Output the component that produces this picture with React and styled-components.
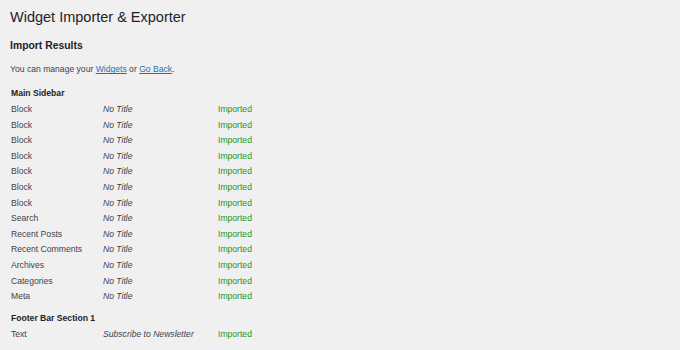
import styled, { createGlobalStyle } from "styled-components";

const GlobalStyle = createGlobalStyle`
  body {
    margin: 0;
    background: #f0f0f1;
    font-family: "Liberation Sans", Arial, sans-serif;
    color: #3c434a;
  }
`;

const Page = styled.div`
  padding: 9.5px 10px 0 10px;
  width: 660px;
  height: 340.5px;
  overflow: hidden;
`;
const Title = styled.h1`
  margin: 0;
  font-size: 14.5px;
  line-height: 15px;
  font-weight: 400;
  color: #1d2327;
`;
const Subtitle = styled.h2`
  margin: 15.5px 0 0 0;
  font-size: 10.4px;
  line-height: 12px;
  font-weight: 700;
  color: #1d2327;
`;
const Note = styled.p`
  margin: 12.3px 0 0 0;
  font-size: 8.6px;
  line-height: 11px;
`;
const Link = styled.a`
  color: #2271b1;
  text-decoration: underline;
`;
const Section = styled.div`
  margin-top: ${(p) => p.$gap}px;
`;
const SectionTitle = styled.div`
  font-size: 8.6px;
  font-weight: 700;
  line-height: 15.6px;
  color: #1d2327;
  padding-left: 1px;
`;
const Row = styled.div`
  display: grid;
  grid-template-columns: 92px 115px auto;
  height: 15.6px;
  line-height: 15.6px;
  font-size: 8.6px;
  padding-left: 1px;
`;
const Cell = styled.span`
  font-style: ${(p) => (p.$italic ? "italic" : "normal")};
  color: ${(p) => (p.$ok ? "#1c961c" : "#3c434a")};
  white-space: nowrap;
`;

const main = [
  "Block",
  "Block",
  "Block",
  "Block",
  "Block",
  "Block",
  "Block",
  "Search",
  "Recent Posts",
  "Recent Comments",
  "Archives",
  "Categories",
  "Meta",
];

const Widget = ({ name, title }) => (
  <Row>
    <Cell>{name}</Cell>
    <Cell $italic>{title}</Cell>
    <Cell $ok>Imported</Cell>
  </Row>
);

export default function App() {
  return (
    <>
      <GlobalStyle />
      <Page>
        <Title>Widget Importer &amp; Exporter</Title>
        <Subtitle>Import Results</Subtitle>
        <Note>
          You can manage your <Link href="#">Widgets</Link> or{" "}
          <Link href="#">Go Back</Link>.
        </Note>
        <Section $gap={11.2}>
          <SectionTitle>Main Sidebar</SectionTitle>
          {main.map((name, i) => (
            <Widget key={i} name={name} title="No Title" />
          ))}
        </Section>
        <Section $gap={6.6}>
          <SectionTitle>Footer Bar Section 1</SectionTitle>
          <Widget name="Text" title="Subscribe to Newsletter" />
        </Section>
      </Page>
    </>
  );
}
